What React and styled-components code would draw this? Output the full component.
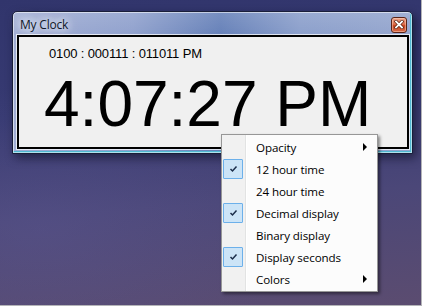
import React from 'react';
import styled, { createGlobalStyle } from 'styled-components';

const GlobalStyle = createGlobalStyle`
    html, body {
        margin: 0;
        padding: 0;
        background: #ffffff;
    }
    * {
        box-sizing: border-box;
    }
`;

const Desktop = styled.div`
    position: relative;
    width: 422px;
    height: 306px;
    padding: 11px 0 0 12px;
    overflow: hidden;
    border-right: 1px solid #b4b4b8;
    border-bottom: 1px solid #b4b4b8;
    background:
        radial-gradient(ellipse 260px 140px at 40px 230px, rgba(95, 90, 150, 0.35), transparent),
        linear-gradient(175deg, #31356c 0%, #373a72 35%, #4b4778 65%, #5b4c70 100%);
`;

const Window = styled.div`
    width: 401px;
    height: 143px;
    display: flex;
    flex-direction: column;
    border: 1px solid #1a1f3a;
    border-radius: 5px 5px 0 0;
    background:
        linear-gradient(to bottom, rgba(255, 255, 255, 0.12), rgba(255, 255, 255, 0) 25px),
        linear-gradient(to right, #a0add3 0%, #90a1cd 30%, #6580b8 52%, #8b9fcb 72%, #95a6ce 100%);
    box-shadow:
        inset 0 0 0 1px rgba(255, 255, 255, 0.55),
        inset -2px -2px 0 0 #4fb8d2,
        3px 4px 10px rgba(10, 10, 30, 0.55);
`;

const TitleBar = styled.div`
    height: 23px;
    display: flex;
    align-items: center;
    justify-content: space-between;
    padding: 2px 5px 0 7px;
`;

const Title = styled.span`
    font-family: "Open Sans", "Noto Sans", sans-serif;
    font-size: 12px;
    letter-spacing: -0.2px;
    color: #101828;
    text-shadow: 0 0 6px #e8eef8, 0 0 10px #e8eef8, 0 0 14px rgba(255, 255, 255, 0.8);
`;

const CloseButton = styled.button`
    width: 16px;
    height: 16px;
    padding: 0;
    display: flex;
    align-items: center;
    justify-content: center;
    border: 1px solid #5a2418;
    border-radius: 3px;
    background: linear-gradient(to bottom, #eda58c 0%, #de6e4c 45%, #c8441f 55%, #d86a48 100%);
    box-shadow: inset 0 0 0 1px rgba(255, 220, 200, 0.45);
`;

const Client = styled.div`
    flex: 1;
    margin: 0 3px 4px 4px;
    background: #f0f0f0;
    border: 2px solid #000000;
    box-shadow: 0 0 0 1px rgba(255, 255, 255, 0.75);
    display: flex;
    flex-direction: column;
`;

const BinaryTime = styled.div`
    font-family: "Liberation Sans", Arial, sans-serif;
    font-size: 13px;
    line-height: 15px;
    letter-spacing: -0.15px;
    color: #000;
    padding: 9px 0 0 30px;
`;

const BigTime = styled.div`
    font-family: "Liberation Sans", Arial, sans-serif;
    font-size: 64px;
    line-height: 64px;
    color: #000;
    margin-top: 11px;
    padding-left: 25px;
    white-space: nowrap;
`;

const ContextMenu = styled.div`
    position: absolute;
    left: 221px;
    top: 134px;
    width: 157px;
    padding: 1px;
    border: 1px solid #979797;
    background: linear-gradient(to right, #f1f1f1 0 23px, #e2e3e3 23px 24px, #ffffff 24px 25px, #fcfcfc 25px);
    box-shadow: 2px 2px 3px rgba(0, 0, 0, 0.45);
    font-family: "Open Sans", "Noto Sans", sans-serif;
    font-size: 11.6px;
    letter-spacing: -0.1px;
    color: #000;
`;

const MenuItem = styled.div`
    height: 22px;
    display: flex;
    align-items: center;
`;

const CheckSlot = styled.span`
    width: 20px;
    height: 20px;
    display: flex;
    align-items: center;
    justify-content: center;
    border: 1px solid ${p => (p.checked ? '#6cb0ea' : 'transparent')};
    background: ${p => (p.checked ? '#cce4f7' : 'transparent')};
    border-radius: 1px;
`;

const Label = styled.span`
    flex: 1;
    padding-left: 13px;
`;

const SubArrow = styled.span`
    width: 0;
    height: 0;
    margin-right: 9px;
    border-top: 4px solid transparent;
    border-bottom: 4px solid transparent;
    border-left: 4px solid #000;
`;

const items = [
    { label: 'Opacity', sub: true },
    { label: '12 hour time', checked: true },
    { label: '24 hour time' },
    { label: 'Decimal display', checked: true },
    { label: 'Binary display' },
    { label: 'Display seconds', checked: true },
    { label: 'Colors', sub: true },
];

const Check = () => (
    <svg width="9" height="8" viewBox="0 0 9 8">
        <path d="M1.5 4 L3.5 6 L7.5 1.5" fill="none" stroke="#1b2d4a" strokeWidth="1.5" />
    </svg>
);

const CloseGlyph = () => (
    <svg width="10" height="9" viewBox="0 0 10 9">
        <path d="M2 1.5 L8 7.5 M8 1.5 L2 7.5" stroke="#5a2010" strokeWidth="3.2" strokeLinecap="square" />
        <path d="M2 1.5 L8 7.5 M8 1.5 L2 7.5" stroke="#ffffff" strokeWidth="1.8" strokeLinecap="square" />
    </svg>
);

const App = () => {
    return (
        <>
            <GlobalStyle />
            <Desktop>
                <Window>
                    <TitleBar>
                        <Title>My Clock</Title>
                        <CloseButton aria-label="Close">
                            <CloseGlyph />
                        </CloseButton>
                    </TitleBar>
                    <Client>
                        <BinaryTime>0100 : 000111 : 011011 PM</BinaryTime>
                        <BigTime>4:07:27 PM</BigTime>
                    </Client>
                </Window>

                <ContextMenu>
                    {items.map(item => (
                        <MenuItem key={item.label}>
                            <CheckSlot checked={item.checked}>{item.checked && <Check />}</CheckSlot>
                            <Label>{item.label}</Label>
                            {item.sub && <SubArrow />}
                        </MenuItem>
                    ))}
                </ContextMenu>
            </Desktop>
        </>
    );
};

export default App;
